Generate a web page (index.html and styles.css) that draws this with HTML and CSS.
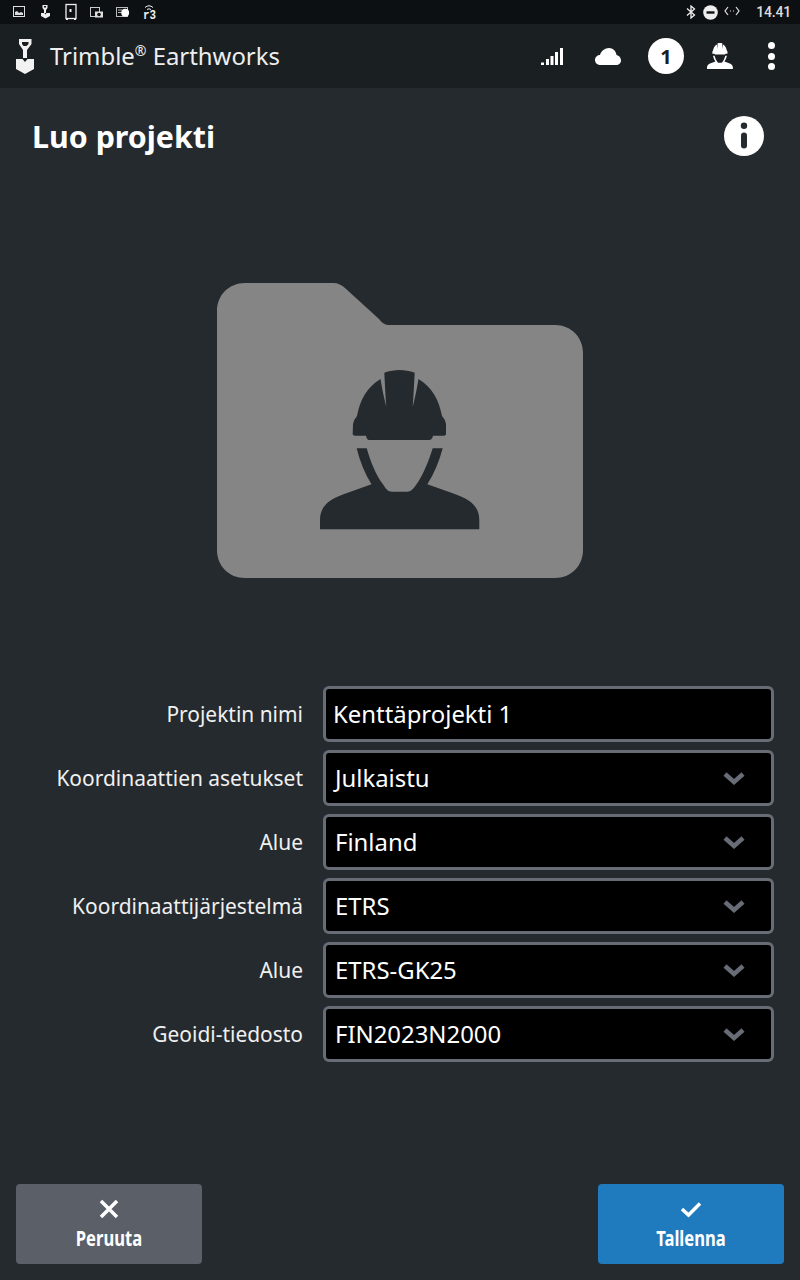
FILE: index.html
```html
<!DOCTYPE html>
<html>
<head>
    <title>Luo projekti</title>
    <meta name="viewport" content="width=device-width, initial-scale=1" charset="UTF-8">
    <link rel="stylesheet" href="styles.css">
</head>
<body>
<svg class="defs" width="0" height="0">
    <symbol id="worker" viewBox="0 0 160 160">
        <path d="M32.7 64L33 54Q33.5 50 37 46C40 30 47 17 60.500 9C62 18 64 28 66.300 37C65.500 26 64.800 12 64.300 2.700C69 1 75 0 79.500 0C84 0 90 1 94.700 2.700C94.200 12 93.500 26 92.700 37C95 28 97 18 98.500 9C112 17 119 30 122 46Q125.700 50 126 54L126 64Q126 65.700 124 65.700L113 65.700Q112 70 109 70L49 70Q47 70 46 65.700L35 65.700Q32.700 65.700 32.700 64Z"/>
        <path d="M36.700 78.300L46.700 78.300C50 90 56 106 63.500 115C66 119 68 121.700 72 121.700L87 121.700C91 121.700 93 119 96 115C103 106 109 90 112.700 78.300L122.700 78.300C119 92 114 104 107.300 114.300L132 123C150 129 159.300 136 159.300 150L159.300 159.300L0 159.300L0 150C0 136 9 129 27 123L51.500 114.300C45 104 40 92 36.700 78.300Z"/>
    </symbol>
    <symbol id="chevron" viewBox="0 0 24 14">
        <path d="M3 3L12 11L21 3" fill="none" stroke="currentColor" stroke-width="4.500"/>
    </symbol>
</svg>

<section class="app">
    <!-- android status bar -->
    <div class="statusbar">
        <svg class="st-slot" viewBox="0 0 26 24"><rect x="7.500" y="6.500" width="11" height="10" fill="none" stroke="#ddd"/><path d="M9 15v-3l2-1 2 2 2-1 2 1v2z" fill="#ddd"/></svg>
        <svg class="st-slot" viewBox="0 0 26 24"><path fill-rule="evenodd" d="M10.500 5h5v3l-1.500 2v3h-2v-3l-1.500-2zM12 6v1.500h2V6zM9 13h3.500l1 1.500 1-1.500H18v3l-4.500 2.500L9 16z" fill="#eee"/></svg>
        <svg class="st-slot" viewBox="0 0 26 24"><rect x="8" y="4.500" width="10" height="14" fill="none" stroke="#eee" stroke-width="1.300"/><rect x="11.500" y="9" width="2" height="3" fill="#eee"/><path d="M8 19h2v1H8zM16 19h2v1h-2z" fill="#eee"/></svg>
        <svg class="st-slot" viewBox="0 0 26 24"><rect x="6.500" y="7.500" width="9" height="9" fill="none" stroke="#ccc"/><rect x="11" y="11.500" width="8" height="6" fill="#ddd"/><circle cx="15" cy="14.500" r="1.800" fill="#111"/></svg>
        <svg class="st-slot" viewBox="0 0 26 24"><rect x="6.500" y="7.500" width="11" height="9" fill="none" stroke="#bbb"/><path d="M8 10h4M8 12.500h4" stroke="#bbb"/><circle cx="15.200" cy="12.700" r="3.900" fill="#fff"/></svg>
        <svg class="st-slot" viewBox="0 0 26 24">
            <path d="M9 7.500Q13 4 17 7.500M11 9.500Q13 8 15 9.500" fill="none" stroke="#eee"/>
            <text class="st-r3" x="7" y="19" textLength="13" lengthAdjust="spacingAndGlyphs">r3</text>
        </svg>
        <div class="st-right">
            <svg class="st-bt" viewBox="0 0 10 14"><path d="M1 3.500L8.500 10L5 13V1L8.500 4L1 10.500" fill="none" stroke="#eee" stroke-width="1.300"/></svg>
            <svg class="st-dnd" viewBox="0 0 15 15"><circle cx="7.500" cy="7.500" r="7.300" fill="#eee"/><rect x="3.500" y="6.300" width="8" height="2.400" fill="#111"/></svg>
            <svg class="st-code" viewBox="0 0 16 10"><path d="M4 1L1 5L4 9M12 1L15 5L12 9" fill="none" stroke="#e4e4e4" stroke-width="1.200"/><path d="M6 4.500h1v1H6zM9 4.500h1v1H9z" fill="#e4e4e4"/></svg>
            <span class="st-time">14.41</span>
        </div>
    </div>

    <header class="appbar">
        <svg class="logo" viewBox="0 0 18 35">
            <path fill-rule="evenodd" d="M3 0H15.500V5L11 11V19H7V11L3 5ZM6 3V5L7.500 7H10.500L12.500 5V3Z" fill="#f2f2f2"/>
            <path d="M0 20H6.500L9 23L11.500 20H18V30L9 35L0 30Z" fill="#f2f2f2"/>
        </svg>
        <div class="brand">Trimble<sup>®</sup> Earthworks</div>
        <svg class="ic-signal" viewBox="0 0 22 18">
            <path d="M0 15.500h3v2.500H0zM5 12h3v6H5zM9.500 9h3v9h-3zM14 5h3v13h-3zM19 1h3v17h-3z" fill="#fff"/>
        </svg>
        <svg class="ic-cloud" viewBox="0 0 26 17">
            <path d="M6 17C2.500 17 0 15 0 12C0 9 2.500 7 5 7C6 3 10 0 14 0C18 0 21 3 21.500 7C24 7.500 26 9.500 26 12.500C26 15 24 17 21 17Z" fill="#fff"/>
        </svg>
        <div class="badge">1</div>
        <svg class="ic-worker"><use href="#worker"/></svg>
        <div class="ic-dots"><i></i><i></i><i></i></div>
    </header>

    <div class="titlerow">
        <h1>Luo projekti</h1>
        <svg class="ic-info" viewBox="0 0 40 40">
            <circle cx="20" cy="20" r="20" fill="#fff"/>
            <circle cx="20" cy="9.700" r="3.200" fill="#252a2f"/>
            <rect x="17" y="16.500" width="6" height="16" rx="3" fill="#252a2f"/>
        </svg>
    </div>

    <svg class="folder" viewBox="0 0 366 295">
        <path d="M28 0H116C121 0 125 2 128 5L162 36C165 40 168 42 172 42H338C354 42 366 54 366 70V267C366 283 354 295 338 295H28C12 295 0 283 0 267V28C0 12 12 0 28 0Z" fill="#858585"/>
        <use href="#worker" x="103" y="87" width="160" height="160" fill="#252a2f"/>
    </svg>

    <div class="form">
        <label>Projektin nimi</label>
        <div class="field field-text">Kenttäprojekti 1</div>

        <label>Koordinaattien asetukset</label>
        <div class="field">Julkaistu<svg class="chev"><use href="#chevron"/></svg></div>

        <label>Alue</label>
        <div class="field">Finland<svg class="chev"><use href="#chevron"/></svg></div>

        <label>Koordinaattijärjestelmä</label>
        <div class="field">ETRS<svg class="chev"><use href="#chevron"/></svg></div>

        <label>Alue</label>
        <div class="field">ETRS-GK25<svg class="chev"><use href="#chevron"/></svg></div>

        <label>Geoidi-tiedosto</label>
        <div class="field">FIN2023N2000<svg class="chev"><use href="#chevron"/></svg></div>
    </div>

    <footer class="actions">
        <button type="button" class="btn btn-cancel">
            <svg class="btn-ic" viewBox="0 0 24 24"><path d="M4 4L20 20M20 4L4 20" fill="none" stroke="#fff" stroke-width="3.500"/></svg>
            <span>Peruuta</span>
        </button>
        <button type="button" class="btn btn-save">
            <svg class="btn-ic" viewBox="0 0 24 24"><path d="M3 12L9.500 18L21 6.500" fill="none" stroke="#fff" stroke-width="3.500"/></svg>
            <span>Tallenna</span>
        </button>
    </footer>
</section>
</body>
</html>
```

FILE: styles.css
```css
* {
    box-sizing: border-box;
}

body {
    margin: 0;
    background-color: #252a2f;
    color: #fff;
    font-family: "Noto Sans", "Open Sans", sans-serif;
}

.defs {
    display: block;
    height: 0;
}

.app {
    display: flex;
    flex-direction: column;
    height: 1280px;
}

/* status bar */
.statusbar {
    display: flex;
    align-items: center;
    flex: none;
    height: 24px;
    padding: 0 9px 0 6px;
    background-color: #0d1012;
}

.st-slot {
    width: 26px;
    height: 24px;
}

.st-r3 {
    font-family: "Liberation Mono", monospace;
    font-size: 13px;
    font-weight: bold;
    fill: #eee;
}

.st-right {
    display: flex;
    align-items: center;
    margin-left: auto;
}

.st-bt { width: 10px; height: 14px; }
.st-dnd { width: 15px; height: 15px; margin-left: 7px; }
.st-code { width: 16px; height: 10px; margin-left: 6px; margin-bottom: 2px; }

.st-time {
    margin-left: 16px;
    font-family: Roboto, sans-serif;
    font-size: 14px;
    font-weight: 500;
    letter-spacing: -0.2px;
    color: #ddd;
}

/* app bar */
.appbar {
    display: flex;
    align-items: center;
    flex: none;
    height: 64px;
    padding: 0 25px 0 16px;
    background-color: #1a1f22;
}

.logo {
    width: 18px;
    height: 35px;
    margin-top: 1px;
}

.brand {
    margin-left: 16px;
    padding-bottom: 2px;
    font-size: 23.9px;
    color: #eee;
}

.brand sup {
    font-size: 14px;
    line-height: 0;
}

.ic-signal { width: 22px; height: 18px; margin-left: auto; }
.ic-cloud { width: 26px; height: 17px; margin-left: 32px; }

.badge {
    display: flex;
    align-items: center;
    justify-content: center;
    width: 36px;
    height: 36px;
    margin-left: 27px;
    border-radius: 50%;
    background-color: #fff;
    color: #1a1f22;
    font-size: 20px;
    font-weight: bold;
}

.ic-worker {
    width: 26px;
    height: 26px;
    margin-left: 23px;
    fill: #fff;
}

.ic-dots {
    display: flex;
    flex-direction: column;
    gap: 3.500px;
    margin-left: 35px;
}

.ic-dots i {
    width: 7px;
    height: 7px;
    border-radius: 50%;
    background-color: #fff;
}

/* title */
.titlerow {
    display: flex;
    align-items: center;
    justify-content: space-between;
    flex: none;
    height: 96px;
    padding: 0 36px 0 32px;
}

h1 {
    margin: 0;
    font-size: 30.4px;
    font-weight: bold;
}

.ic-info {
    width: 40px;
    height: 40px;
}

.folder {
    flex: none;
    align-self: center;
    width: 366px;
    height: 295px;
    margin-top: 99px;
}

/* form */
.form {
    display: grid;
    grid-template-columns: 287px 451px;
    grid-auto-rows: 56px;
    gap: 8px 20px;
    align-items: center;
    margin-top: 108px;
    padding-left: 16px;
}

.form label {
    font-size: 20.95px;
    text-align: right;
    color: #f0f0f0;
}

.field {
    display: flex;
    align-items: center;
    justify-content: space-between;
    height: 56px;
    padding: 0 25px 1px 9px;
    border: 3px solid #676c76;
    border-radius: 6px;
    background-color: #000;
    font-size: 23.9px;
}

.field-text {
    padding-left: 7px;
}

.chev {
    width: 24px;
    height: 14px;
    margin-top: 1px;
    color: #676c76;
}

/* bottom buttons */
.actions {
    display: flex;
    justify-content: space-between;
    margin-top: auto;
    padding: 0 16px 16px;
}

.btn {
    display: flex;
    flex-direction: column;
    align-items: center;
    width: 186px;
    height: 80px;
    padding: 13px 0 0;
    border: none;
    border-radius: 4px;
    color: #fff;
    font-family: inherit;
    font-size: 21px;
    font-weight: bold;
}

.btn span {
    display: block;
    margin-top: 4px;
    line-height: 27px;
    transform: scaleX(0.79);
}

.btn-ic {
    width: 24px;
    height: 24px;
}

.btn-cancel { background-color: #5a5f68; }
.btn-save { background-color: #1f7bbd; }
```
